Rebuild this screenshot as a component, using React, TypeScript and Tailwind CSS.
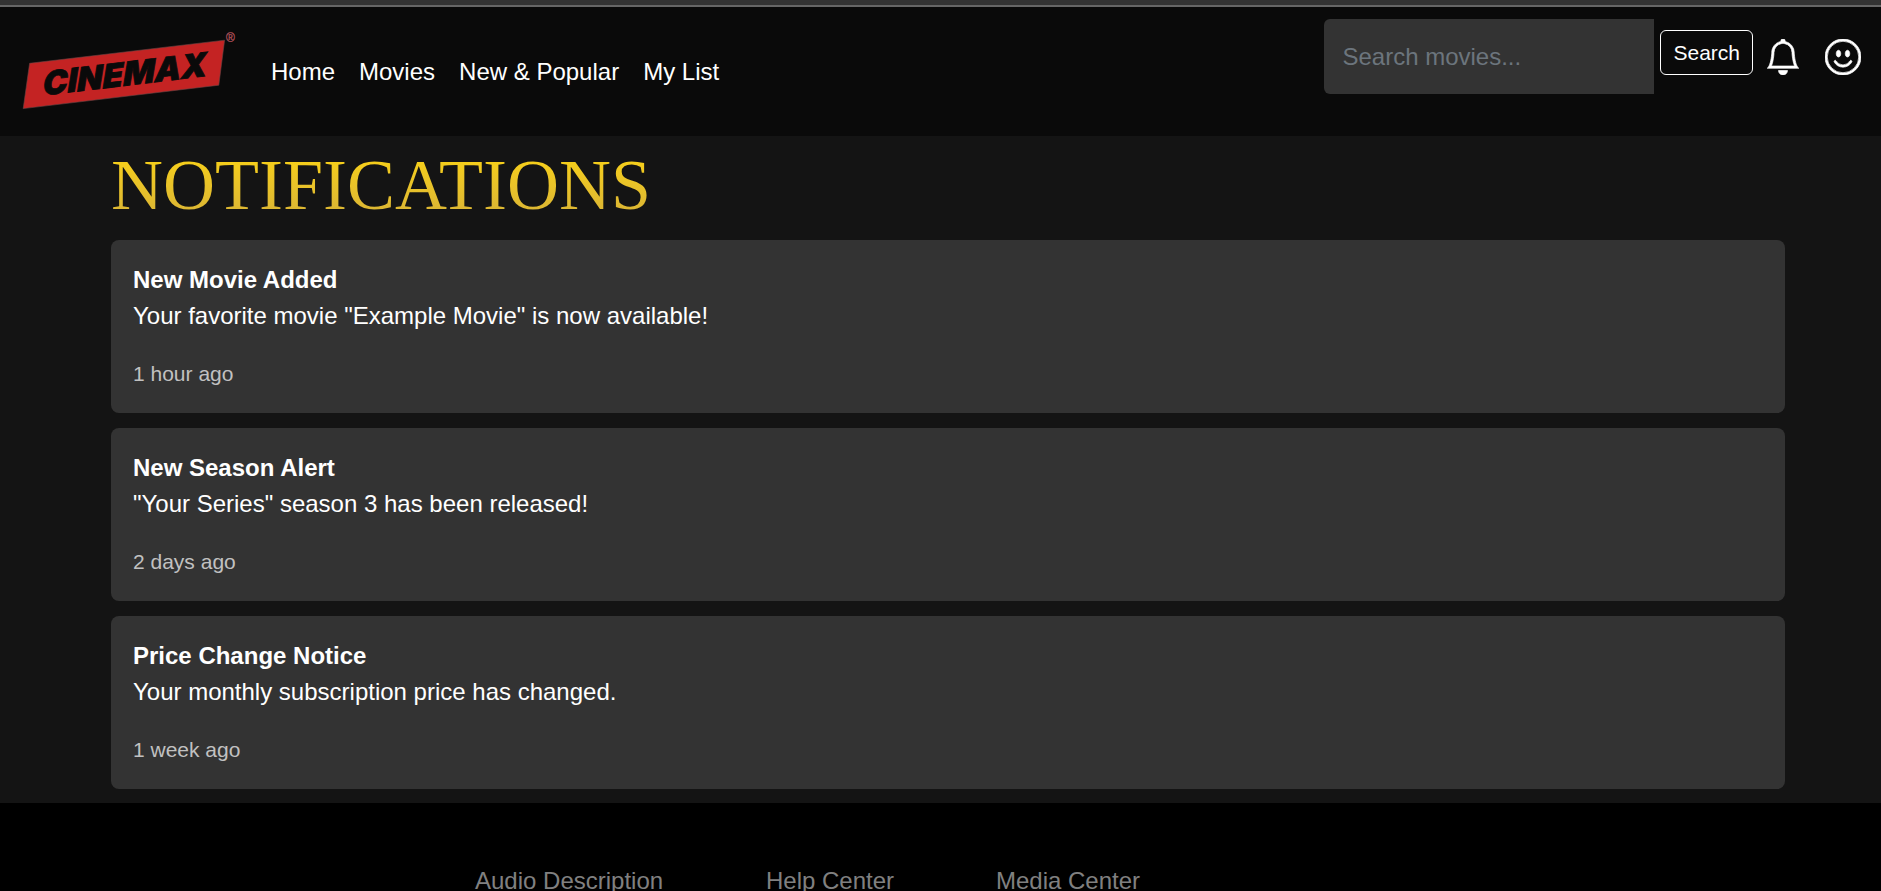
import { BsBell, BsEmojiSmile } from "react-icons/bs";

const navLinks = ["Home", "Movies", "New & Popular", "My List"];

const notifications = [
  {
    title: "New Movie Added",
    message: 'Your favorite movie "Example Movie" is now available!',
    time: "1 hour ago",
  },
  {
    title: "New Season Alert",
    message: '"Your Series" season 3 has been released!',
    time: "2 days ago",
  },
  {
    title: "Price Change Notice",
    message: "Your monthly subscription price has changed.",
    time: "1 week ago",
  },
];

const footerLinks = ["Audio Description", "Help Center", "Media Center"];

function Logo() {
  return (
    <svg viewBox="20 30 220 84" className="h-[84px] w-[220px]" role="img" aria-label="Cinemax">
      <polygon
        points="29.6,63.3 224.6,40.2 218.8,85.2 23.2,108.6"
        fill="#c42323"
        stroke="#6b4444"
        strokeWidth="0.6"
      />
      <text
        transform="translate(43 95.5) skewY(-6.8)"
        fill="#0a0a0a"
        stroke="#0a0a0a"
        strokeWidth="0.8"
        fontFamily="Inter, 'Liberation Sans', sans-serif"
        fontWeight="900"
        fontStyle="italic"
        fontSize="33"
      >
        CINEMAX
      </text>
      <text
        x="226"
        y="42"
        fill="#b0505a"
        stroke="#b0505a"
        strokeWidth="0.3"
        fontFamily="'Liberation Sans', sans-serif"
        fontSize="12"
      >
        ®
      </text>
    </svg>
  );
}

function Header() {
  return (
    <header className="flex h-[129px] items-center justify-between bg-[#0a0a0a] px-5">
      <div className="flex items-center gap-[31px]">
        <a href="#">
          <Logo />
        </a>
        <nav className="flex gap-6 text-2xl leading-9 text-white">
          {navLinks.map((label) => (
            <a key={label} href="#">
              {label}
            </a>
          ))}
        </nav>
      </div>
      <form className="mt-3 flex items-center self-start" onSubmit={(e) => e.preventDefault()}>
        <input
          type="search"
          aria-label="Search movies"
          placeholder="Search movies..."
          className="h-[75px] w-[330px] rounded-l-md bg-[#333] px-[18px] text-2xl text-white outline-none placeholder:text-[#6c757d]"
        />
        <button
          type="submit"
          className="mb-2 ml-1.5 h-[45px] rounded-md border border-white px-3 text-[21px] leading-8 text-white"
        >
          Search
        </button>
        <a href="#" aria-label="Notifications" className="ml-3 text-white">
          <BsBell className="size-9" strokeWidth={0.3} />
        </a>
        <a href="#" aria-label="Profile" className="ml-6 text-white">
          <BsEmojiSmile className="size-9" strokeWidth={0.3} />
        </a>
      </form>
    </header>
  );
}

export default function App() {
  return (
    <div className="min-h-screen bg-black font-['Liberation_Sans',Arial,sans-serif]">
      <div className="h-[7px] border-b-2 border-[#666] bg-[#333]" />
      <Header />
      <main className="bg-[#141414] pt-1.5 pr-24 pb-3.5 pl-[111px]">
        <h1 className="mb-3 w-fit bg-linear-to-b from-[#ffd700] to-[#d4af37] bg-clip-text font-['Liberation_Serif','Times_New_Roman',serif] text-7xl leading-[86px] text-transparent">
          NOTIFICATIONS
        </h1>
        <ul className="flex flex-col gap-[15px]">
          {notifications.map((n) => (
            <li key={n.title} className="rounded-lg bg-[#333] px-[22px] pt-[22px] pb-[23px]">
              <h2 className="text-2xl leading-9 font-bold text-white">{n.title}</h2>
              <p className="mb-6 text-2xl leading-9 text-white">{n.message}</p>
              <p className="text-[21px] leading-8 text-[#c1c1c1]">{n.time}</p>
            </li>
          ))}
        </ul>
      </main>
      <footer className="bg-black pt-[60px] pl-[475px]">
        <ul className="grid grid-cols-[291px_230px_auto] text-2xl leading-9 text-[#808080]">
          {footerLinks.map((label) => (
            <li key={label}>
              <a href="#">{label}</a>
            </li>
          ))}
        </ul>
      </footer>
    </div>
  );
}
